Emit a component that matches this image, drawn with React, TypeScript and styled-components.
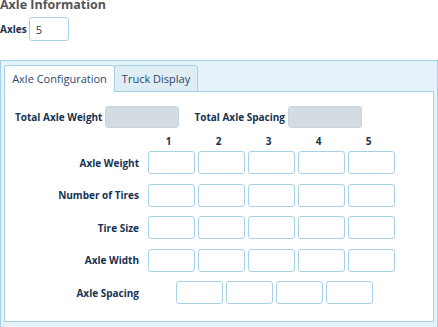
import React from "react";
import styled, { createGlobalStyle } from "styled-components";

const Global = createGlobalStyle`
  html, body { margin: 0; padding: 0; background: #fff; }
  body { font-family: "Open Sans", "Noto Sans", sans-serif; overflow: hidden; }
  * { box-sizing: border-box; }
`;

const Page = styled.div`
  width: 438px;
  height: 327px;
  display: flex;
  flex-direction: column;
`;

const Title = styled.div`
  font-weight: 700;
  font-size: 12.5px;
  line-height: 13px;
  color: #555;
  margin-top: -2px;
`;

const AxlesRow = styled.div`
  display: flex;
  align-items: center;
  gap: 2px;
  margin-top: 6px;
`;

const Label = styled.span`
  font-weight: 700;
  font-size: 10px;
  color: #173252;
  white-space: nowrap;
`;

const Field = styled.div<{ $w?: number; $h?: number }>`
  width: ${(p) => p.$w ?? 47}px;
  height: ${(p) => p.$h ?? 23}px;
  border: 1px solid #a8d1e5;
  border-radius: 3px;
  background: #fff;
  font-size: 11px;
  color: #333;
  display: flex;
  align-items: center;
  padding-left: 6px;
`;

const ReadOnly = styled.div`
  width: 74px;
  height: 22px;
  border: 1px solid #c9d6de;
  border-radius: 3px;
  background: #d3dce2;
`;

const Panel = styled.div`
  margin-top: 19px;
  flex: 1;
  border: 1px solid #a6d0e4;
  border-bottom: none;
  background: #e6f2f9;
  padding: 4px 3px 0 3px;
  display: flex;
  flex-direction: column;
`;

const Tabs = styled.div`
  display: flex;
  height: 27px;
  position: relative;
  z-index: 1;
  margin-bottom: -1px;
`;

const Tab = styled.div<{ $active?: boolean }>`
  height: 27px;
  padding: 0 10px;
  display: flex;
  align-items: center;
  border: 1px solid #a6d0e4;
  border-bottom: ${(p) => (p.$active ? "1px solid #fff" : "1px solid #a6d0e4")};
  border-radius: 3px 3px 0 0;
  background: ${(p) => (p.$active ? "#fff" : "#deedf6")};
  color: #2b4a68;
  font-size: 11px;
  white-space: nowrap;
  width: ${(p) => (p.$active ? 111 : 84)}px;
  justify-content: center;
  & + & { margin-left: -1px; }
`;

const Content = styled.div`
  height: 231px;
  border: 1px solid #a6d0e4;
  background: #fff;
  padding: 14px 0 0 0;
  display: flex;
  flex-direction: column;
`;

const TotalsRow = styled.div`
  display: flex;
  align-items: center;
  padding-left: 10px;
  gap: 3px;
`;

const Spacer = styled.div`
  width: 9px;
`;

const Matrix = styled.div`
  margin-top: 7px;
  display: grid;
  grid-template-columns: 140px repeat(5, 47px);
  column-gap: 3px;
  row-gap: 9.5px;
  align-items: center;
`;

const HeadRow = styled.div`
  display: contents;
`;

const ColHead = styled.div`
  font-weight: 700;
  font-size: 10px;
  color: #173252;
  text-align: center;
  padding-right: 6px;
  height: 12px;
  line-height: 12px;
  margin-bottom: -5.5px;
`;

const RowLabel = styled(Label)`
  text-align: right;
  padding-right: 6px;
`;

const SpacingCells = styled.div`
  grid-column: 2 / span 5;
  display: flex;
  gap: 3px;
  padding-left: 28px;
`;

const rows = ["Axle Weight", "Number of Tires", "Tire Size", "Axle Width"];

export default function App() {
  return (
    <Page>
      <Global />
      <Title>Axle Information</Title>
      <AxlesRow>
        <Label>Axles</Label>
        <Field $w={40} $h={24}>5</Field>
      </AxlesRow>
      <Panel>
        <Tabs>
          <Tab $active>Axle Configuration</Tab>
          <Tab>Truck Display</Tab>
        </Tabs>
        <Content>
          <TotalsRow>
            <Label>Total Axle Weight</Label>
            <ReadOnly />
            <Spacer />
            <Label>Total Axle Spacing</Label>
            <ReadOnly />
          </TotalsRow>
          <Matrix>
            <HeadRow>
              <div />
              {[1, 2, 3, 4, 5].map((n) => (
                <ColHead key={n}>{n}</ColHead>
              ))}
            </HeadRow>
            {rows.map((r) => (
              <React.Fragment key={r}>
                <RowLabel>{r}</RowLabel>
                {[1, 2, 3, 4, 5].map((n) => (
                  <Field key={n} />
                ))}
              </React.Fragment>
            ))}
            <RowLabel>Axle Spacing</RowLabel>
            <SpacingCells>
              {[1, 2, 3, 4].map((n) => (
                <Field key={n} />
              ))}
            </SpacingCells>
          </Matrix>
        </Content>
      </Panel>
    </Page>
  );
}
